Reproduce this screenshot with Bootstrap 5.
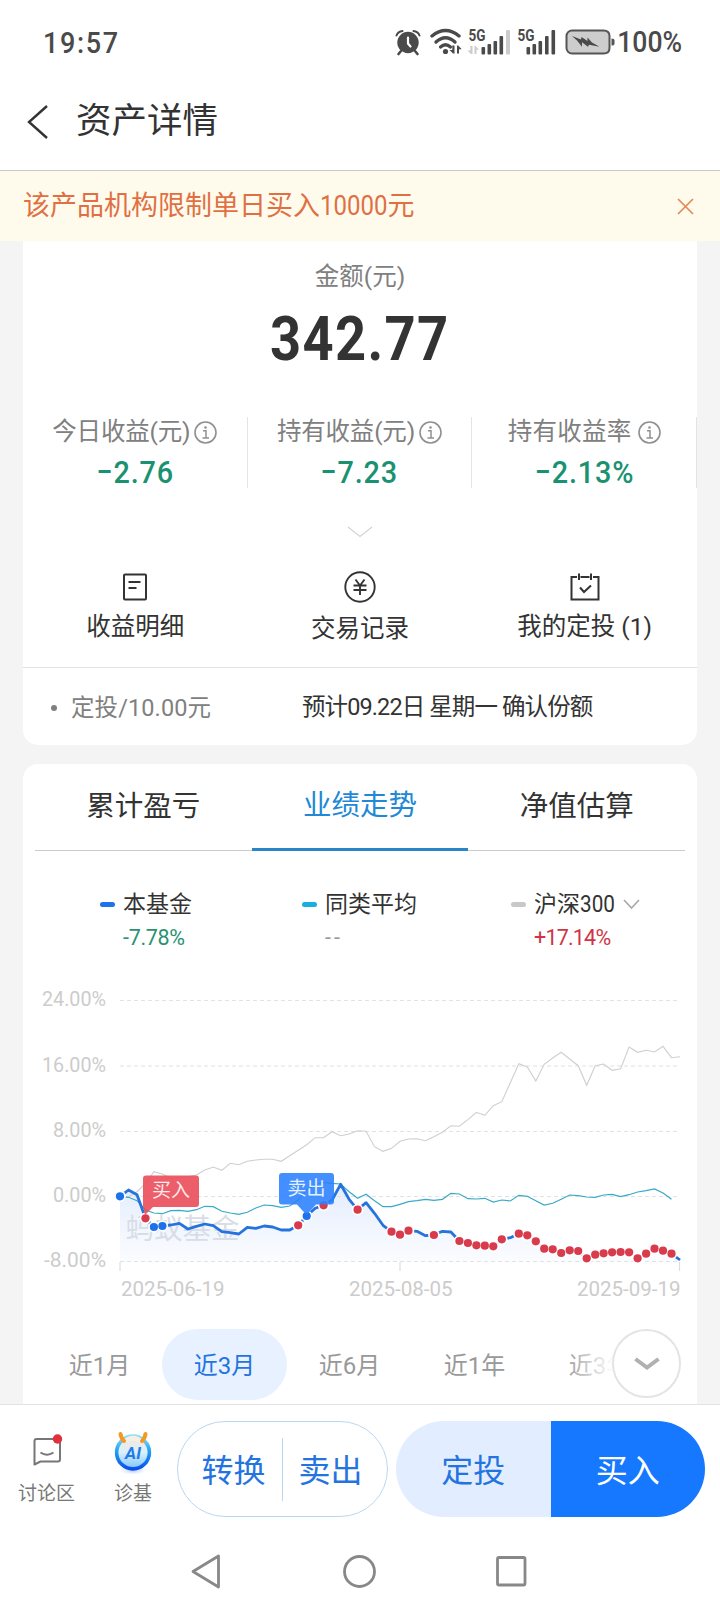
<!DOCTYPE html>
<html lang="zh-CN">
<head>
<meta charset="utf-8">
<meta name="viewport" content="width=device-width, initial-scale=1">
<title>资产详情</title>
<link href="https://cdn.jsdelivr.net/npm/bootstrap@5.3.0/dist/css/bootstrap.min.css" rel="stylesheet">
<style>
body{font-family:Roboto,"Noto Sans CJK SC",sans-serif;background:#f4f4f4;color:#333;line-height:1;overflow:hidden}
.screen{width:720px;height:1610px}
svg{display:block;flex:none}
.status{height:84px;padding:0 38px 0 43px;color:#4a4a4a;font-size:30px;font-weight:500;background:#fff}
.header{height:87px;border-bottom:1px solid #c8c8c8;padding:0 0 15px 26px;background:#fff}
.header h1{font-size:35.5px;font-weight:400;line-height:1;padding-top:5px}
.slim{display:inline-block;transform:scaleX(.9)}
.notice{height:70px;background:#fffbec;color:#e07044;font-size:27px;padding:0 26px 0 23px}
.notice .num{display:inline-block;transform:scaleX(.89);transform-origin:0 50%;margin-right:-8.500px}
.panel{margin:0 23px;background:#fff}
.asset{height:504px;border-radius:0 0 15px 15px}
.trend{height:640px;margin-top:19px;border-radius:15px 15px 0 0}
.lbl{font-size:24.5px;color:#808080}
.total{font-size:61px;font-weight:700;letter-spacing:1.500px;color:#333;margin-top:20px}
.total .slim{transform:scaleX(.89)}
.metrics{margin-top:47px;height:69px}
.metrics>div{border-right:1px solid #e4e4e4}
.metrics .lbl{letter-spacing:-.2px;height:26px;padding-top:5px}
.gain{font-size:32px;font-weight:500;color:#1a9271;letter-spacing:1px;margin-top:13px}
.act{font-size:24.5px;height:97px}
.act svg{height:34px}
.plan{border-top:1px solid #e4e4e4;height:78px;font-size:23.5px;padding:3px 0 0 28px}
.plan .first{width:251px;color:#808080}
.bullet{width:6px;height:6px;border-radius:50%;background:#808080;margin-right:14px}
.tabs{height:87px;margin:0 12px;border-bottom:1px solid #ccc}
.tabs>div{font-size:28.5px;height:87px;padding-bottom:1px}
.tabs .on{color:#2088d4;border-bottom:3px solid #2886c8;padding:1px 0 0}
.legend{height:113px;padding-top:42px;font-size:23px}
.legend>div{column-gap:8px;display:grid;grid-template-columns:15px auto;row-gap:11px;align-content:start;align-items:center;position:relative}
.dash{height:5px;border-radius:3px}
.pct{grid-column:2;font-size:21.5px;letter-spacing:-.3px}
.chart text{font-family:Roboto,"Noto Sans CJK SC",sans-serif}
.ranges{height:71px;position:relative;overflow:hidden;padding-left:14px}
.ranges>span{width:125px;height:71px;flex:none;font-size:24px;color:#999;border-radius:36px;padding-top:2px}
.ranges>span.on{background:#e7f1ff;color:#2474e0}
.fade-end{position:absolute;right:0;top:0;width:134px;height:71px;background:linear-gradient(90deg,#fff0,#fff 38%)}
.more{position:absolute;right:16px;top:0;width:69px;height:69px;border:2px solid #e4e4e4;border-radius:50%;background:#fff}
.bottom{height:206px;background:#fff;border-top:1px solid #e2e2e2}
.acts{height:128px;padding:16px 15px 0 0}
.mini{font-size:19px;color:#777;height:96px}
.pill{height:96px;font-size:32px;overflow:hidden;border-radius:48px}
.swap{width:211px;border:1px solid #bcd7f0;color:#2474e0}
.swap .bar{width:1px;height:63px;background:#bcd7f0}
.buy{width:309px}
.buy>div{width:50%;height:96px;padding-top:3px}
</style>
</head>
<body>
<div class="screen d-flex flex-column">
  <div class="status d-flex align-items-center justify-content-between">
    <span class="slim" style="letter-spacing:1.800px;transform-origin:0 50%;padding-top:2px">19:57</span>
    <div class="d-flex align-items-center">
      <svg width="210" height="30" viewBox="392.500 27 210 30">
        <g fill="none" stroke="#4a4a4a" stroke-linecap="round">
          <circle cx="407.500" cy="42.500" r="10.700" fill="#4a4a4a" stroke="none"/>
          <path d="M396 35.500Q397.500 31.500 402 31M419 35.500Q417.500 31.500 413 31" stroke-width="2"/>
          <path d="M400.500 51l-2.500 3M414.500 51l2.500 3" stroke-width="2.600"/>
          <path d="M407.500 37.500v6l2.500 3" stroke="#fff" stroke-width="2.200"/>
          <path d="M431.500 36Q445 25 458.500 36" stroke-width="3.400"/>
          <path d="M435.500 42Q445 33.500 454.500 42" stroke-width="3.400"/>
          <path d="M440 47Q445 42.500 450 47" stroke-width="3.200"/>
        </g>
        <g fill="#4a4a4a">
          <circle cx="445" cy="51.500" r="2.600"/>
          <path d="M454 45.500v8h-1.500l-3.500-3.500h2.800v-4.500zM456.500 53.500v-8h1.200l3.500 3.800h-2.700v4.200z"/>
          <text x="468" y="41" font-size="16.500" font-weight="700" textLength="17" lengthAdjust="spacingAndGlyphs">5G</text>
          <path d="M472 46v8h-1.500l-3.500-3.500h2.800V46zM474 54v-8h1.200l3.200 3.800h-2.400V54z" fill="#ccc"/>
          <rect x="481" y="47" width="3.600" height="7.500" rx="1"/><rect x="487" y="44" width="3.600" height="10.500" rx="1"/><rect x="493" y="41" width="3.600" height="13.500" rx="1"/><rect x="499" y="36" width="3.600" height="18.500" rx="1"/>
          <rect x="505.500" y="30" width="4" height="24.500" rx="1" fill="#ccc"/>
          <text x="517" y="41" font-size="16.500" font-weight="700" textLength="17" lengthAdjust="spacingAndGlyphs">5G</text>
          <rect x="526" y="47" width="3.600" height="7.500" rx="1"/><rect x="532" y="44" width="3.600" height="10.500" rx="1"/><rect x="538" y="41" width="3.600" height="13.500" rx="1"/><rect x="544.500" y="36" width="3.600" height="18.500" rx="1"/><rect x="551" y="30" width="3.600" height="24.500" rx="1"/>
        </g>
        <rect x="566" y="30.500" width="42" height="23" rx="5.500" fill="#cdcdcd" stroke="#555" stroke-width="2"/>
      </svg>
      <svg width="14" height="30" viewBox="602.500 27 14 30"><path d="M602 30.500h1q6 0 6 5.500v12q0 5.500-6 5.500h-1" fill="#cdcdcd" stroke="#555" stroke-width="2"/><path d="M611 38.500q3 0 3 2v3q0 2-3 2z" fill="#555"/></svg>
      <svg width="28" height="12" viewBox="0 0 28 12" style="margin-left:-45px;margin-right:17px"><path d="M0 0l9 3.500L9.500 1l6 4V1.500l4.500 5 7.500 4.300-10.500-2-1 2-6-4.500v4.500L5 4.500z" fill="#4a4a4a"/></svg>
      <span class="slim" style="font-size:29.500px;transform-origin:100% 50%;margin-left:-7px;padding-top:2px">100%</span>
    </div>
  </div>
  <div class="header d-flex align-items-center">
    <svg width="23" height="36" viewBox="0 0 23 36" style="margin-right:27px;margin-top:5px"><path d="M21 2L3 18l18 16" fill="none" stroke="#333" stroke-width="2.400"/></svg>
    <h1 class="m-0">资产详情</h1>
  </div>
  <div class="notice d-flex align-items-center justify-content-between">
    <span>该产品机构限制单日买入<span class="num">10000</span>元</span>
    <svg width="17" height="17" viewBox="0 0 17 17"><path d="M1 1l15 15M16 1L1 16" stroke="#e58a55" stroke-width="1.700"/></svg>
  </div>

  <div class="panel asset">
    <div class="text-center lbl" style="padding-top:24px">金额(元)</div>
    <div class="total text-center" style="margin-top:19px"><span class="slim">342.77</span></div>
    <div class="metrics row g-0 text-center">
      <div class="col-4"><div class="lbl d-flex justify-content-center align-items-center gap-1">今日收益(元)<svg width="23" height="23" viewBox="0 0 23 23"><use href="#info"/></svg></div><div class="gain"><span class="slim">−2.76</span></div></div>
      <div class="col-4"><div class="lbl d-flex justify-content-center align-items-center gap-1">持有收益(元)<svg width="23" height="23" viewBox="0 0 23 23"><use href="#info"/></svg></div><div class="gain"><span class="slim">−7.23</span></div></div>
      <div class="col-4"><div class="lbl d-flex justify-content-center align-items-center" style="gap:6px;letter-spacing:.3px">持有收益率<svg width="23" height="23" viewBox="0 0 23 23"><use href="#info"/></svg></div><div class="gain"><span class="slim">−2.13%</span></div></div>
    </div>
    <svg class="mx-auto" width="26" height="12" viewBox="0 0 26 12" style="margin-top:40px"><path d="M1 1l12 9.500L25 1" fill="none" stroke="#d4d4d4" stroke-width="1.200"/></svg>
    <div class="act row g-0 text-center" style="margin-top:32px">
      <div class="col-4"><svg class="mx-auto" width="34" height="34" viewBox="0 0 34 34" fill="none" stroke="#333" stroke-width="2"><rect x="6" y="4.500" width="22" height="25" rx="1"/><path d="M10.500 12h12M10.500 18h8"/></svg><div style="margin-top:11px">收益明细</div></div>
      <div class="col-4"><svg class="mx-auto" width="34" height="34" viewBox="0 0 34 34" fill="none" stroke="#333" stroke-width="1.900"><circle cx="17" cy="17" r="14.700"/><path d="M12.500 9.500L17 15.500l4.500-6M10.500 15.500h13M10.500 20h13M17 15.500V25"/></svg><div style="margin-top:13px">交易记录</div></div>
      <div class="col-4"><svg class="mx-auto" width="34" height="34" viewBox="0 0 34 34" fill="none" stroke="#333" stroke-width="2"><path d="M9 7H3.500v22.500h27V7H25M12.500 7h9M11 3.500v6.500M23 3.500v6.500M12 17.500l4 4.500 7-6.500"/></svg><div style="margin-top:11px">我的定投 (1)</div></div>
    </div>
    <div class="plan d-flex align-items-center">
      <div class="first d-flex align-items-center"><i class="bullet"></i><span style="letter-spacing:.1px;padding-top:2px">定投/10.00元</span></div>
      <div style="letter-spacing:-.9px">预计09.22日 星期一 确认份额</div>
    </div>
  </div>

  <div class="panel trend">
    <div class="tabs row g-0 text-center">
      <div class="col-4 d-flex align-items-center justify-content-center">累计盈亏</div>
      <div class="col-4 d-flex align-items-center justify-content-center on">业绩走势</div>
      <div class="col-4 d-flex align-items-center justify-content-center">净值估算</div>
    </div>
    <div class="legend d-flex">
      <div style="margin-left:77px;width:202px"><i class="dash" style="background:#1f73e8"></i><span>本基金</span><span class="pct" style="color:#2a9272">-7.78%</span></div>
      <div style="width:209px"><i class="dash" style="background:#18aede"></i><span>同类平均</span><span class="pct" style="color:#999;letter-spacing:3px">--</span></div>
      <div><i class="dash" style="background:#c8c8c8"></i><span class="d-flex align-items-center gap-2"><span>沪深<span class="slim" style="transform-origin:0 50%;margin-right:-4px">300</span></span><svg width="17" height="11" viewBox="0 0 17 11"><path d="M1 1l7.500 8L16 1" fill="none" stroke="#aaa" stroke-width="1.700"/></svg></span><span class="pct" style="color:#cf3545;letter-spacing:-.8px">+17.14%</span></div>
    </div>
    <svg class="chart" id="chart" width="674" height="347" viewBox="23 964 674 347"></svg>
    <div class="ranges d-flex" style="margin-top:18px">
      <span class="d-flex align-items-center justify-content-center">近1月</span>
      <span class="d-flex align-items-center justify-content-center on">近3月</span>
      <span class="d-flex align-items-center justify-content-center">近6月</span>
      <span class="d-flex align-items-center justify-content-center">近1年</span>
      <span class="d-flex align-items-center justify-content-center">近3年</span>
      <div class="fade-end"></div>
      <div class="more d-flex align-items-center justify-content-center"><svg width="26" height="14" viewBox="0 0 26 14"><path d="M1.500 2L13 10.500 24.500 2" fill="none" stroke="#b0b0b0" stroke-width="4"/></svg></div>
    </div>
  </div>

  <div class="bottom">
    <div class="acts d-flex">
      <div class="mini text-center" style="width:93px;padding-top:11px">
        <svg class="mx-auto" width="34" height="38" viewBox="30 1432 34 38"><path d="M34.500 1464.500V1441q0-2 2-2h21.500q2 0 2 2v18.500q0 2-2 2H40.500z" fill="none" stroke="#777" stroke-width="2" stroke-linejoin="round"/><path d="M40.500 1452.500q6.500 4.500 13 0" fill="none" stroke="#777" stroke-width="2"/><circle cx="57.500" cy="1439" r="4.700" fill="#e0303c"/></svg>
        <div style="margin-top:14px">讨论区</div>
      </div>
      <div class="mini text-center" style="width:80px;padding-top:7px">
        <svg class="mx-auto" width="44" height="46" viewBox="111 1428 44 46">
          <defs><linearGradient id="ring" x2="0" y2="1"><stop stop-color="#8fe0fa"/><stop offset=".4" stop-color="#25a8f5"/><stop offset="1" stop-color="#0b50e8"/></linearGradient><linearGradient id="face" x2="0" y2="1"><stop stop-color="#f6e9dc"/><stop offset=".5" stop-color="#d9f0fb"/><stop offset="1" stop-color="#7cc4ff"/></linearGradient><radialGradient id="glow"><stop stop-color="#9db8ff"/><stop offset="1" stop-color="#dfe8ff" stop-opacity="0"/></radialGradient></defs>
          <ellipse cx="133" cy="1469.500" rx="14" ry="6" fill="url(#glow)"/>
          <circle cx="133" cy="1452.500" r="16.400" fill="url(#face)" stroke="url(#ring)" stroke-width="3.600"/>
          <path d="M122 1440.500Q133 1431 144 1440.500L141 1443Q133 1438 125 1443z" fill="#f8eee4"/>
          <path d="M120.500 1434q1 5 3.500 7M145.500 1434q-1 5-3.500 7" fill="none" stroke="#f49a24" stroke-width="4" stroke-linecap="round"/>
          <text x="133" y="1458.500" text-anchor="middle" font-size="17" font-weight="700" font-style="italic" fill="#247be8">AI</text>
        </svg>
        <div style="margin-top:10px">诊基</div>
      </div>
      <div class="pill swap d-flex align-items-center" style="margin-left:4px">
        <div class="text-center" style="width:104px;padding:4px 0 0 7px">转换</div><div class="bar"></div><div class="text-center" style="width:104px;padding:4px 9px 0 0">卖出</div>
      </div>
      <div class="pill buy d-flex" style="margin-left:8px">
        <div class="d-flex align-items-center justify-content-center" style="background:#e2eeff;color:#2474e0">定投</div>
        <div class="d-flex align-items-center justify-content-center" style="background:#1677ff;color:#fff">买入</div>
      </div>
    </div>
    <div class="d-flex justify-content-between" style="padding:19px 191px 0 190px">
      <svg width="34" height="40" viewBox="0 0 34 40" fill="none" stroke="#888" stroke-width="2.800" stroke-linejoin="round"><path d="M28.500 4v31L3 19.500z"/></svg>
      <svg width="34" height="40" viewBox="0 0 34 40" fill="none" stroke="#888" stroke-width="2.800"><circle cx="16.500" cy="19.500" r="15"/></svg>
      <svg width="34" height="40" viewBox="0 0 34 40" fill="none" stroke="#888" stroke-width="2.800"><rect x="2.500" y="5.500" width="27.500" height="27.500" rx="1.500"/></svg>
    </div>
  </div>
</div>
<svg width="0" height="0" class="position-absolute"><defs><g id="info"><circle cx="11.500" cy="11.500" r="10.500" fill="none" stroke="#909090" stroke-width="1.600"/><circle cx="11.500" cy="6.500" r="1.300" fill="#909090"/><path d="M9 9.800h3v7M8.500 17h6.500" fill="none" stroke="#909090" stroke-width="1.500"/></g></defs></svg>
<script src="https://cdn.jsdelivr.net/npm/bootstrap@5.3.0/dist/js/bootstrap.bundle.min.js"></script>
<script>
// Daily series, measured in thirds of a pixel below the top of the plot (y = 970)
const index300=[680,680,665,640,605,612,625,622,620,615,600,591,601,580,584,574,570,568,568,574,557,541,524,503,503,485,497,492,482,484,530,544,535,514,507,506,512,500,487,467,469,449,427,436,407,395,338,281,291,333,283,264,247,267,287,346,287,282,301,296,231,247,241,246,229,263,260];
const peers=[680,682,692,720,729,731,722,721,724,719,709,710,724,729,733,727,714,705,707,712,708,690,660,645,637,640,642,665,685,673,692,710,710,703,695,692,688,691,688,670,672,686,687,685,696,690,693,676,679,692,705,700,688,675,677,681,682,675,673,680,674,666,662,657,669,688];
const fund=[679,660,674,745,771,768,765,760,777,769,762,767,785,788,792,772,775,768,771,780,780,766,738,715,706,690,643,688,719,698,730,766,785,794,782,784,797,795,784,786,813,819,826,827,829,808,803,791,796,814,836,838,849,841,843,865,854,850,847,846,847,865,851,836,842,851,870];
const buys=[3,21,24,28,32,33,34,37,40,41,42,43,44,45,47,48,49,50,51,52,53,54,55,56,57,58,59,60,61,62,63,64,65], sells=[0,4,5,22];
const X=i=>(120+i*560/66).toFixed(1), Y=v=>(970+v/3).toFixed(1);
const pts=a=>a.map((v,i)=>X(i)+','+Y(v)).join(' ');
let s='<defs><linearGradient id="area" x2="0" y2="1"><stop stop-color="#e4edfd"/><stop offset="1" stop-color="#fbfcff"/></linearGradient></defs>';
s+=`<polygon points="${pts(fund)} 680,1261.5 120,1261.5" fill="url(#area)"/>`;
s+='<text x="125.500" y="1239" font-size="28.500" fill="#d9dde6">蚂蚁基金</text>';
[['24.00%',1000.5],['16.00%',1066],['8.00%',1131.5],['0.00%',1196.5],['-8.00%',1261.5]].forEach(([t,y])=>{
  s+=`<path d="M120 ${y}H680" stroke="#e2e2e2" stroke-width="1.2" stroke-dasharray="4 3"/><text x="106" y="${y+5.7}" text-anchor="end" font-size="21" fill="#ccc" textLength="${t.length==6?(t[0]=='-'?62:64):53}" lengthAdjust="spacingAndGlyphs">${t}</text>`;
});
s+='<path d="M120 1262v9M400 1262v9M679.500 1262v9" stroke="#ddd" stroke-width="1.200"/>';
[['2025-06-19',121],['2025-08-05',349],['2025-09-19',577]].forEach(([t,x])=>{
  s+=`<text x="${x}" y="1295.5" font-size="21" fill="#ccc" textLength="103.5" lengthAdjust="spacingAndGlyphs">${t}</text>`;
});
s+=`<polyline points="${pts(index300)}" fill="none" stroke="#cfcfcf" stroke-width="1.1"/>`;
s+=`<polyline points="${pts(peers)}" fill="none" stroke="#38a9c6" stroke-width="1.2"/>`;
s+=`<polyline points="${pts(fund)}" fill="none" stroke="#2673de" stroke-width="2.8" stroke-linejoin="round"/>`;
const dot=(c,r)=>i=>{s+=`<circle cx="${X(i)}" cy="${Y(fund[i])}" r="${r}" fill="${c}"/>`};
[...buys,...sells].forEach(dot('#fff',5.8));
buys.forEach(dot('#d83b4b',4.1));sells.forEach(dot('#1b72ea',4.1));
s+='<path d="M146 1175.500h50q3 0 3 3V1204q0 3-3 3h-43L145 1215l-2-9V1178.500q0-3 3-3z" fill="#e84855" fill-opacity=".88"/><text x="152" y="1196.500" font-size="19" fill="#ffe9e9">买入</text>';
s+='<path d="M282 1173h49q3 0 3 3v25.500q0 3-3 3H316L306.500 1215 297 1204.500H282q-3 0-3-3V1176q0-3 3-3z" fill="#2a80ff" fill-opacity=".88"/><text x="287.500" y="1194.500" font-size="19" fill="#e6f1ff">卖出</text>';
document.getElementById('chart').innerHTML=s;
</script>
</body>
</html>
